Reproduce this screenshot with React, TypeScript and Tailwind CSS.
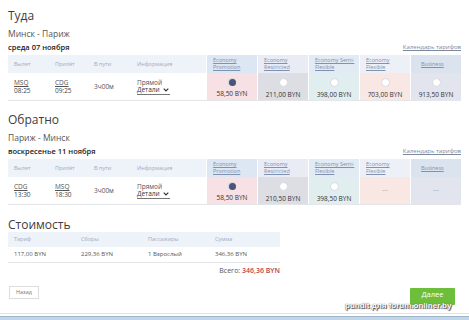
type Fare = {
  name: string[];
  head: string;
  cell: string;
  price?: string;
  selected?: boolean;
  pad?: string;
};

type Leg = {
  title: string;
  route: string;
  date: string;
  from: string;
  fromTime: string;
  to: string;
  toTime: string;
  fares: Fare[];
};

const fareStyles = [
  { name: ["Economy", "Promotion"], head: "bg-[#dde6f3]", cell: "bg-[#f8e1e4]" },
  { name: ["Economy", "Restricted"], head: "bg-[#e9ecf5]", cell: "bg-[#dddde4]" },
  { name: ["Economy Semi-", "Flexible"], head: "bg-[#e2ebf4]", cell: "bg-[#e1eef0]" },
  { name: ["Economy", "Flexible"], head: "bg-[#eef0f7]", cell: "bg-[#f8e7e3]" },
  { name: ["Business"], head: "bg-[#dbe3ef]", cell: "bg-[#e2e5ee]", pad: "pl-[10px]" },
];

const legs: Leg[] = [
  {
    title: "Туда",
    route: "Минск - Париж",
    date: "среда 07 ноября",
    from: "MSQ",
    fromTime: "08:25",
    to: "CDG",
    toTime: "09:25",
    fares: fareStyles.map((f, i) => ({
      ...f,
      price: ["58,50 BYN", "211,00 BYN", "398,00 BYN", "703,00 BYN", "913,50 BYN"][i],
      selected: i === 0,
    })),
  },
  {
    title: "Обратно",
    route: "Париж - Минск",
    date: "воскресенье 11 ноября",
    from: "CDG",
    fromTime: "13:30",
    to: "MSQ",
    toTime: "18:30",
    fares: fareStyles.map((f, i) => ({
      ...f,
      price: ["58,50 BYN", "210,50 BYN", "398,50 BYN", undefined, undefined][i],
      selected: i === 0,
    })),
  },
];

function Radio({ selected }: { selected?: boolean }) {
  if (selected) {
    return (
      <span className="flex h-[8px] w-[8px] items-center justify-center rounded-full bg-[#cfd5e6]">
        <span className="block h-[7px] w-[7px] rounded-full bg-[#4b5479]" />
      </span>
    );
  }
  return <span className="block h-[9px] w-[9px] rounded-full border border-[#d6d9e0] bg-white" />;
}

function LegSection({ leg, first }: { leg: Leg; first?: boolean }) {
  return (
    <section className={first ? "" : "mt-[12px]"}>
      <h2 className="text-[12px] leading-[14px] text-[#3d3d3d]">{leg.title}</h2>
      <div className="mt-[5px] text-[8.5px] leading-[12px] text-[#555]">{leg.route}</div>
      <div className="mt-[2px] flex items-end justify-between leading-[10px]">
        <span className="text-[7.5px] font-semibold text-[#222]">{leg.date}</span>
        <a className="text-[6px] text-[#7b88a0] underline">Календарь тарифов</a>
      </div>
      <div className="mt-[3px] border-b border-[#e4e6ea]">
        <div className="flex h-[18px]">
          <div className="flex w-[198px] items-center bg-[#eef2f9] text-[5.5px] text-[#a3abb9]">
            <span className="w-[41px] pl-[6px]">Вылет</span>
            <span className="w-[39px] pl-[6px]">Прилёт</span>
            <span className="w-[43px] pl-[6px]">В пути</span>
            <span className="pl-[6px]">Информация</span>
          </div>
          {leg.fares.map((f) => (
            <div
              key={f.name.join()}
              className={`flex w-[51px] flex-col justify-center border-l border-white text-[5.5px] leading-[7px] text-[#8191b0] ${f.head} ${f.pad ?? "pl-[6px]"}`}
            >
              {f.name.map((n) => (
                <span key={n} className="whitespace-nowrap underline">
                  {n}
                </span>
              ))}
            </div>
          ))}
        </div>
        <div className="flex h-[27px]">
          <div className="flex w-[198px] items-center text-[6.5px] leading-[7.5px] text-[#555]">
            <div className="w-[41px] pl-[6px]">
              <div className="underline">{leg.from}</div>
              <div className="text-[#444]">{leg.fromTime}</div>
            </div>
            <div className="w-[39px] pl-[6px]">
              <div className="underline">{leg.to}</div>
              <div className="text-[#444]">{leg.toTime}</div>
            </div>
            <div className="w-[43px] pl-[6px]">3ч00м</div>
            <div className="pl-[6px]">
              <div>Прямой</div>
              <div className="flex w-[33px] items-center gap-[3px] border-b border-[#777] text-[#333]">
                Детали
                <svg width="6" height="4" viewBox="0 0 6 4">
                  <path d="M0.7 0.7 L3 3 L5.3 0.7" fill="none" stroke="#333" strokeWidth="1.2" />
                </svg>
              </div>
            </div>
          </div>
          {leg.fares.map((f) =>
            f.price ? (
              <div
                key={f.name.join()}
                className={`flex w-[51px] flex-col items-center border-l border-white pt-[5px] ${f.cell}`}
              >
                <Radio selected={f.selected} />
                <span className="mt-[3px] text-[6.5px] leading-[9px] text-[#333]">{f.price}</span>
              </div>
            ) : (
              <div
                key={f.name.join()}
                className={`flex w-[51px] items-center justify-center border-l border-white text-[6px] text-[#888] ${f.cell}`}
              >
                ---
              </div>
            )
          )}
        </div>
      </div>
    </section>
  );
}

export default function App() {
  return (
    <div className="relative h-[320px] w-[469px] overflow-hidden bg-white font-['Open_Sans',sans-serif]">
      <div className="px-[8px] pt-[9px]">
        {legs.map((leg, i) => (
          <LegSection key={leg.title} leg={leg} first={i === 0} />
        ))}

        <section className="mt-[13px] w-[272px]">
          <h2 className="text-[12px] leading-[14px] text-[#3d3d3d]">Стоимость</h2>
          <div className="grid h-[15px] grid-cols-[67px_67px_67px_1fr] items-center bg-[#eef2f9] text-[5.5px] text-[#a3abb9]">
            <span className="pl-[6px]">Тариф</span>
            <span className="pl-[6px]">Сборы</span>
            <span className="pl-[6px]">Пассажиры</span>
            <span className="pl-[6px]">Сумма</span>
          </div>
          <div className="grid h-[16px] grid-cols-[67px_67px_67px_1fr] items-center border-b border-[#e4e6ea] text-[6px] text-[#555]">
            <span className="pl-[6px]">117,00 BYN</span>
            <span className="pl-[6px]">229,36 BYN</span>
            <span className="pl-[6px]">1 Взрослый</span>
            <span className="pl-[6px]">346,36 BYN</span>
          </div>
          <div className="mt-[3px] text-right text-[7px] leading-[10px] text-[#555]">
            Всего: <span className="font-semibold text-[#b8454c]">346,36 BYN</span>
          </div>
        </section>

        <div className="mt-[10px] flex items-start justify-between pl-[1px] pr-[6px]">
          <button className="h-[13px] w-[30px] border border-[#dcdcdc] bg-white text-[5.5px] text-[#777]">
            Назад
          </button>
          <button className="mt-[2px] h-[17px] w-[45px] rounded-[1px] bg-[#6dbf3b] pb-[3px] text-[7.5px] text-white">
            Далее
          </button>
        </div>
      </div>

      <div className="mt-[8px] border-t border-[#e3e3e3]" />
      <div className="mt-[2px] h-[6px] border-t border-[#9db7cf] bg-[#c3d6e8]" />

      <span className="absolute left-[345px] top-[300px] whitespace-nowrap font-['Liberation_Sans',sans-serif] text-[8px] font-bold text-white [text-shadow:0_0_1px_#333,1px_1px_1px_#444]">
        pundit для forum.onliner.by
      </span>
    </div>
  );
}
